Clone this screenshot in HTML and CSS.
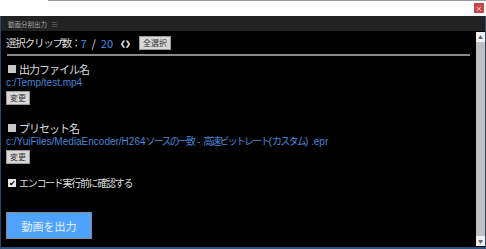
FILE: index.html
```html
<!DOCTYPE html>
<html lang="ja">
<head>
    <meta charset="UTF-8">
    <title>動画分割出力</title>
    <link rel="stylesheet" href="styles.css">
</head>
<body>
    <div class="topbar">
        <span class="close">×</span>
    </div>
    <div class="panel">
        <div class="tab">
            <span class="tab-title">動画分割出力</span>
            <span class="tab-menu">≡</span>
        </div>
        <div class="body">
            <div class="content">
                <div class="row count">
                    <span class="jp">選択クリップ数：</span><span class="num">7</span><span class="sep">/</span><span class="num">20</span>
                    <span class="reload">❮❯</span>
                    <button class="btn">全選択</button>
                </div>
                <hr>

                <div class="label"><span class="box"></span>出力ファイル名</div>
                <div class="path">c:/Temp/test.mp4</div>
                <button class="btn">変更</button>

                <div class="label preset"><span class="box"></span>プリセット名</div>
                <div class="path">c:/YuiFiles/MediaEncoder/H264<span class="ja">ソースの一致</span> - <span class="ja">高速ビットレート</span>(<span class="ja">カスタム</span>) .epr</div>
                <button class="btn">変更</button>

                <label class="check"><span class="tick">✔</span>エンコード実行前に確認する</label>

                <button class="output">動画を出力</button>
            </div>
            <div class="scroll">
                <span class="arrow">▲</span>
                <span class="track"></span>
                <span class="arrow">▼</span>
            </div>
        </div>
    </div>
</body>
</html>
```

FILE: styles.css
```css
* {
    box-sizing: border-box;
}
body {
    margin: 0;
    width: 486px;
    height: 249px;
    background: #fff;
    font-family: "Noto Sans CJK JP", "Liberation Sans", sans-serif;
    overflow: hidden;
}
.topbar {
    height: 16px;
    background: linear-gradient(#9a9a9a, #9a9a9a) 48px 0 / 100% 1px no-repeat, #fff;
    display: flex;
    justify-content: flex-end;
    align-items: center;
    padding-right: 2px;
}
.close {
    width: 10px;
    height: 10px;
    background: #c9464a;
    color: #fff;
    font-size: 7px;
    line-height: 10px;
    text-align: center;
}
.panel {
    height: 233px;
    display: flex;
    flex-direction: column;
    border-left: 1px solid #2a4a6e;
    border-right: 1px solid #2a4a6e;
    border-bottom: 2px solid #2f5478;
    overflow: hidden;
}
.tab {
    flex-shrink: 0;
    height: 15px;
    background: #222;
    display: flex;
    align-items: center;
    padding-left: 7px;
    gap: 4px;
    line-height: 10px;
}
.tab-title {
    font-size: 6.5px;
    color: #aaa;
}
.tab-menu {
    font-size: 7px;
    color: #777;
}
.body {
    flex: 1;
    min-height: 0;
    background: #000;
    display: flex;
}
.content {
    flex: 1;
    padding: 3px 4px 0 5px;
    color: #ddd;
    line-height: 14px;
}
.row {
    display: flex;
    align-items: center;
    height: 18px;
    font-size: 10px;
}
.jp {
    font-size: 10.5px;
    letter-spacing: -1.2px;
}
.num {
    color: #4a8fe0;
    font-size: 11px;
}
.sep {
    font-size: 11px;
    margin: 0 5px;
}
.reload {
    font-size: 7px;
    font-weight: bold;
    margin: 0 9px 0 7px;
    letter-spacing: -1px;
}
.btn {
    display: block;
    font-family: inherit;
    font-size: 8px;
    color: #333;
    background: #d8d8d8;
    border: 1px solid #9a9a9a;
    padding: 0 3px;
    height: 14px;
    line-height: 12px;
}
hr {
    margin: 2px 2px 0 1px;
    border: none;
    border-top: 2px solid #8a8a8a;
}
.label {
    display: flex;
    align-items: center;
    font-size: 11px;
    letter-spacing: -1px;
    margin: 6px 0 0 2px;
    height: 14px;
}
.preset {
    margin-top: 16px;
}
.box {
    width: 8px;
    height: 8px;
    background: #c8c8c8;
    margin-right: 3px;
}
.path {
    color: #4a86d8;
    font-family: "Liberation Sans", "Noto Sans CJK JP", sans-serif;
    font-size: 10px;
    height: 14px;
    line-height: 14px;
    margin-bottom: 1px;
    white-space: nowrap;
}
.ja {
    letter-spacing: -1.8px;
}
.check {
    display: flex;
    align-items: center;
    font-size: 10px;
    letter-spacing: -1.3px;
    margin: 12px 0 0 2px;
    height: 14px;
}
.tick {
    width: 8px;
    height: 8px;
    background: #e8e8e8;
    color: #000;
    font-size: 8px;
    line-height: 8px;
    letter-spacing: 0;
    text-align: center;
    margin-right: 3px;
}
.output {
    display: block;
    margin-top: 22px;
    width: 86px;
    height: 27px;
    background: #4da3ff;
    border: 1px solid #8a8a8a;
    color: #e6f0ff;
    font-family: "Liberation Serif", "Noto Sans CJK JP", serif;
    font-size: 11px;
}
.scroll {
    width: 9px;
    margin: 1px 0 1px 0;
    display: flex;
    flex-direction: column;
    background: #c0c0c0;
}
.arrow {
    height: 10px;
    background: #f0f0f0;
    color: #666;
    font-size: 5px;
    line-height: 10px;
    text-align: center;
}
.track {
    flex: 1;
}
```
